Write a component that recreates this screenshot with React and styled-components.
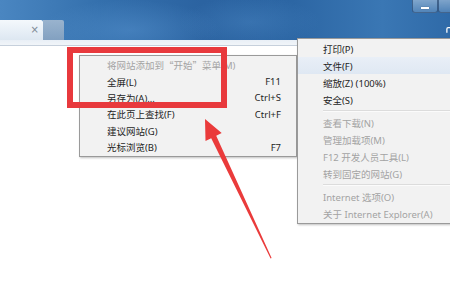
import React from 'react';
import styled, { createGlobalStyle } from 'styled-components';

const GlobalStyle = createGlobalStyle`
    html, body {
        margin: 0;
        padding: 0;
        background: #ffffff;
    }
    body {
        font-family: "Noto Sans", "Noto Sans CJK SC", sans-serif;
    }
`;

// null = separator
const rightItems = [
    { label: '打印(P)' },
    { label: '文件(F)', active: true },
    { label: '缩放(Z) (100%)' },
    { label: '安全(S)' },
    null,
    { label: '查看下载(N)', disabled: true },
    { label: '管理加载项(M)', disabled: true },
    { label: 'F12 开发人员工具(L)', disabled: true },
    { label: '转到固定的网站(G)', disabled: true },
    null,
    { label: 'Internet 选项(O)', disabled: true },
    { label: '关于 Internet Explorer(A)', disabled: true },
];

const App = () => {
    // built here so the Quote component below is already defined
    const leftItems = [
        {
            label: (
                <>
                    将网站添加到<Quote>“</Quote>开始<Quote>”</Quote>菜单(M)
                </>
            ),
            disabled: true,
        },
        { label: '全屏(L)', key: 'F11' },
        { label: '另存为(A)...', key: 'Ctrl+S' },
        { label: '在此页上查找(F)', key: 'Ctrl+F' },
        { label: '建议网站(G)' },
        { label: '光标浏览(B)', key: 'F7' },
    ];

    return (
        <Screen>
            <GlobalStyle />
            <TitleBar>
                <TabStrip>
                    <ActiveTab>
                        <CloseMark>×</CloseMark>
                    </ActiveTab>
                    <NewTab />
                </TabStrip>
                <CaptionButtons>
                    <CaptionButton>
                        <MinimizeBar />
                    </CaptionButton>
                    <CaptionButton />
                </CaptionButtons>
                <ToolIcon viewBox="0 0 8 10">
                    <path d="M2 10 V4 Q2 1 5 1 H8 V3 H5 Q4 3 4 4 V10 Z" fill="#ffffff" />
                </ToolIcon>
            </TitleBar>
            <Toolbar />
            <Page />

            <Menu $left={79} $top={55} $width={218} $gutter={27} $padRight={15}>
                {leftItems.map((item, i) => (
                    <MenuItem key={i} $height={16.4} $disabled={item.disabled}>
                        <span>{item.label}</span>
                        <Shortcut>{item.key}</Shortcut>
                    </MenuItem>
                ))}
            </Menu>

            <Menu $left={297} $top={38} $width={170} $gutter={25} $padRight={10}>
                {rightItems.map((item, i) =>
                    item ? (
                        <MenuItem key={i} $height={17} $disabled={item.disabled} $active={item.active}>
                            <span>{item.label}</span>
                        </MenuItem>
                    ) : (
                        <Separator key={i} />
                    )
                )}
            </Menu>

            <HighlightBox />

            <Arrow viewBox="0 0 450 300" width="450" height="300">
                <polygon
                    points="205,119 221.7,133.1 216.2,135.8 271.6,258 270.6,258.4 211.2,138.2 205.5,140.9"
                    fill="#ea3b3b"
                />
            </Arrow>
        </Screen>
    );
};

export default App;

const Screen = styled.div`
    position: relative;
    width: 450px;
    height: 300px;
    overflow: hidden;
    display: flex;
    flex-direction: column;
    background: #ffffff;
`;

const TitleBar = styled.div`
    position: relative;
    height: 40px;
    flex-shrink: 0;
    display: flex;
    align-items: flex-end;
    background:
        radial-gradient(ellipse 90px 30px at 130px 30px, rgba(90, 150, 210, 0.45), transparent),
        radial-gradient(ellipse 70px 25px at 250px 22px, rgba(80, 140, 200, 0.35), transparent),
        linear-gradient(90deg, #4a86c1 0%, #3470ad 22%, #2b63a1 45%, #2c66a4 65%, #3a77b4 85%, #2f6aa8 100%);
`;

const TabStrip = styled.div`
    display: flex;
    align-items: flex-end;
    height: 20px;
`;

const ActiveTab = styled.div`
    width: 43px;
    height: 20px;
    box-sizing: border-box;
    display: flex;
    align-items: center;
    justify-content: flex-end;
    padding-right: 4px;
    background: linear-gradient(180deg, #f4f8fc 0%, #e6eef6 60%, #dde7f1 100%);
    border-top-right-radius: 2px;
`;

const CloseMark = styled.span`
    font-family: "DejaVu Sans", sans-serif;
    font-size: 10px;
    line-height: 10px;
    color: #7d8894;
`;

const NewTab = styled.div`
    width: 21px;
    height: 20px;
    background: linear-gradient(180deg, #a9bdd2 0%, #8ea7c2 100%);
    opacity: 0.85;
    border-top-right-radius: 2px;
`;

const CaptionButtons = styled.div`
    display: flex;
    align-self: flex-start;
    margin-left: auto;
`;

const CaptionButton = styled.div`
    width: 26px;
    height: 13px;
    box-sizing: border-box;
    border: 1px solid rgba(30, 60, 100, 0.6);
    border-top: none;
    border-radius: 0 0 3px 3px;
    background: linear-gradient(180deg, rgba(190, 210, 230, 0.55) 0%, rgba(120, 160, 200, 0.45) 100%);
    display: flex;
    align-items: flex-end;
    justify-content: center;
    padding-bottom: 3px;
    &:last-child {
        width: 12px;
        border-right: none;
        border-radius: 0 0 0 3px;
    }
`;

const MinimizeBar = styled.div`
    width: 8px;
    height: 2px;
    background: #ffffff;
    box-shadow: 0 0 1px rgba(0, 0, 0, 0.6);
`;

const ToolIcon = styled.svg`
    position: absolute;
    right: 0;
    bottom: 6px;
    width: 5px;
    height: 9px;
`;

const Toolbar = styled.div`
    height: 5px;
    flex-shrink: 0;
    background: linear-gradient(180deg, #e9eff6 0%, #f1f5f9 100%);
    border-bottom: 1px solid #c6d0dc;
`;

const Page = styled.div`
    flex: 1;
    background: #ffffff;
`;

const Menu = styled.div`
    position: absolute;
    left: ${(p) => p.$left}px;
    top: ${(p) => p.$top}px;
    width: ${(p) => p.$width}px;
    box-sizing: border-box;
    padding: 1px 0 1px;
    background: #f2f2f2;
    border: 1px solid #9a9a9a;
    box-shadow: 1px 1px 2px rgba(0, 0, 0, 0.25);
    --gutter: ${(p) => p.$gutter}px;
    --pad-right: ${(p) => p.$padRight}px;
`;

const MenuItem = styled.div`
    display: flex;
    align-items: center;
    justify-content: space-between;
    height: ${(p) => p.$height}px;
    padding-left: var(--gutter);
    padding-right: var(--pad-right);
    font-size: 9.5px;
    white-space: nowrap;
    color: ${(p) => (p.$disabled ? '#a3a3a3' : '#1e1e1e')};
    background: ${(p) => (p.$active ? 'linear-gradient(180deg, #e9eff7 0%, #dfe8f3 100%)' : 'transparent')};
`;

const Quote = styled.span`
    font-family: "Noto Sans CJK SC", sans-serif;
`;

const Shortcut = styled.span`
    color: #1e1e1e;
`;

const Separator = styled.div`
    height: 1px;
    margin: 2px 0 2px var(--gutter);
    background: #dcdcdc;
    border-bottom: 1px solid #fbfbfb;
`;

const HighlightBox = styled.div`
    position: absolute;
    left: 67px;
    top: 47px;
    width: 160px;
    height: 61px;
    box-sizing: border-box;
    border: 6px solid #e8393d;
`;

const Arrow = styled.svg`
    position: absolute;
    left: 0;
    top: 0;
    pointer-events: none;
`;
